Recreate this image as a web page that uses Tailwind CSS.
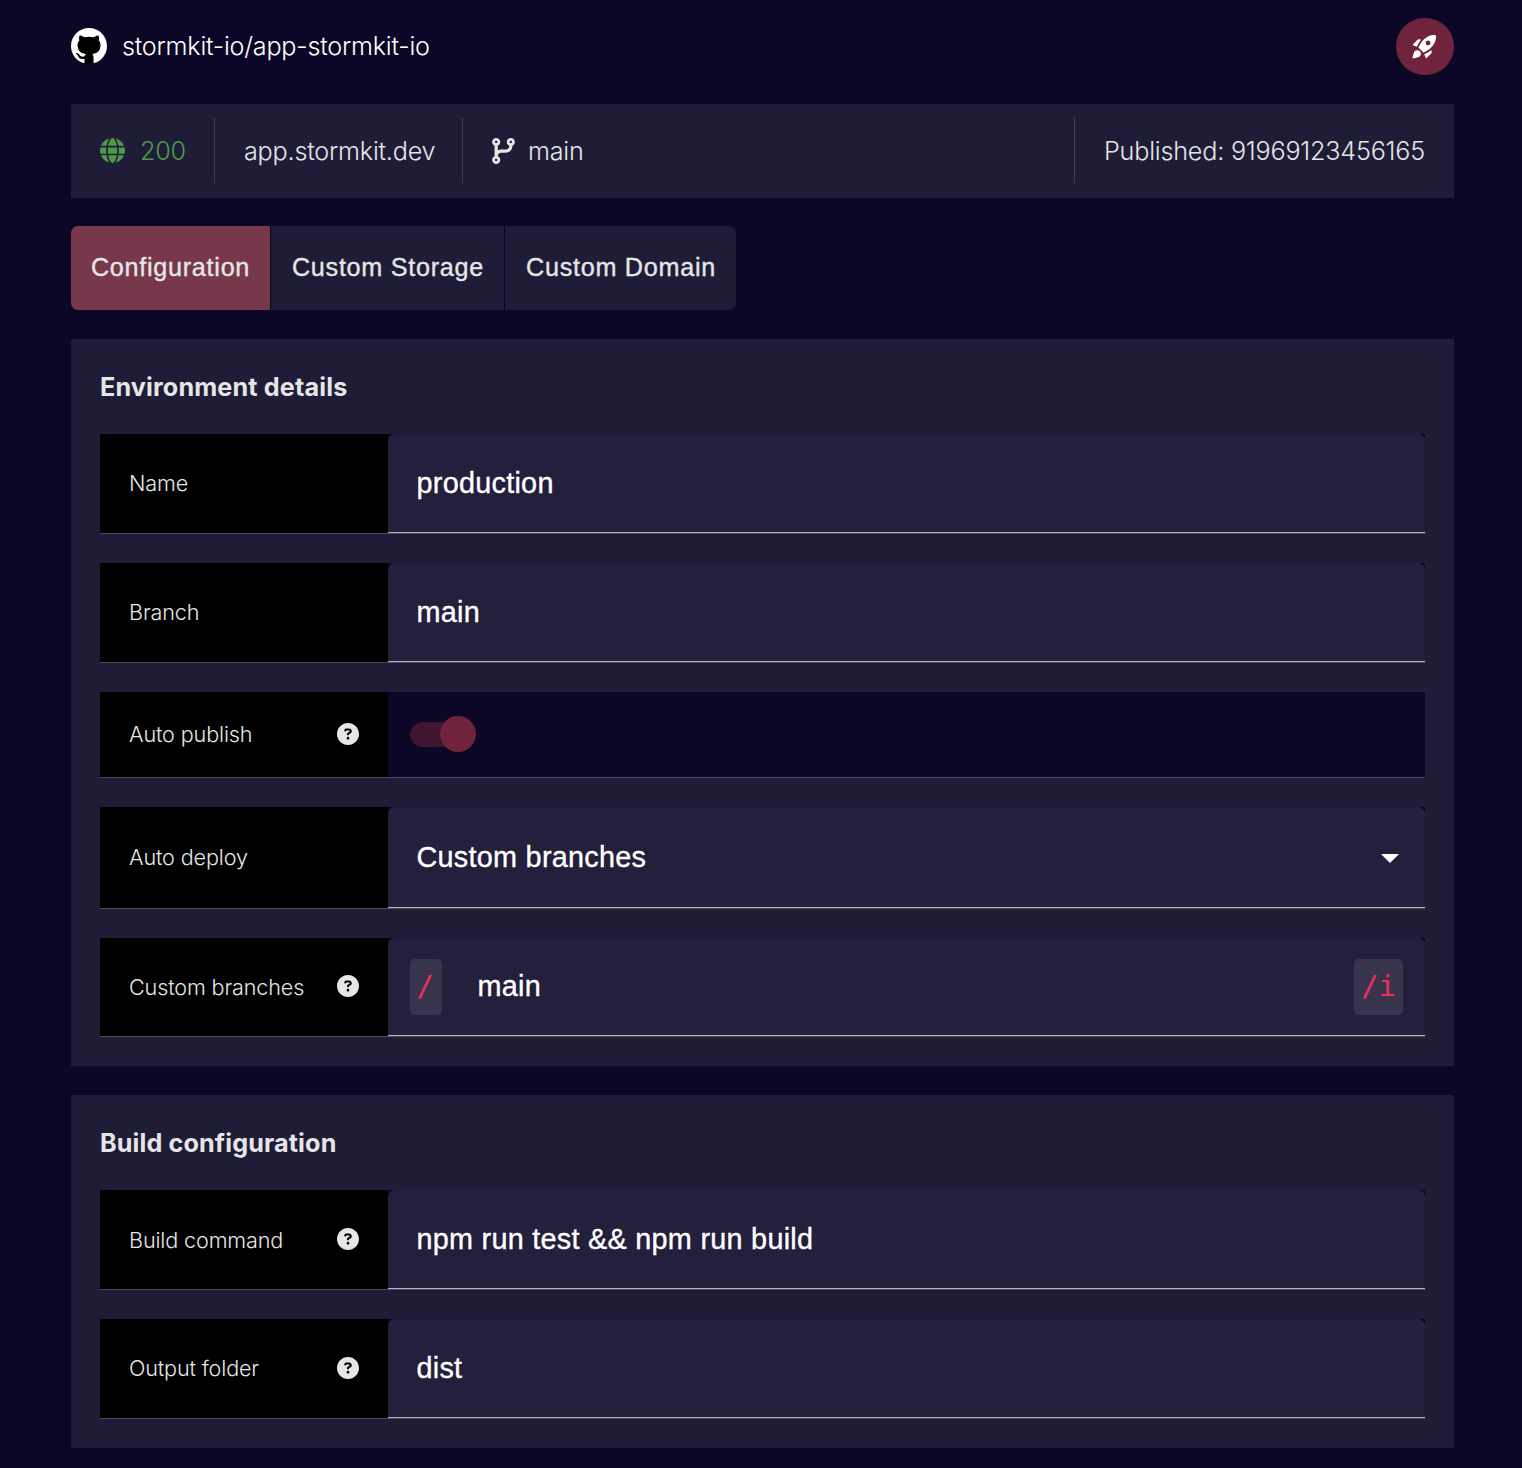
<!DOCTYPE html>
<html lang="en">
<head>
<meta charset="utf-8">
<title>Environment configuration</title>
<script src="https://cdn.jsdelivr.net/npm/@tailwindcss/browser@4"></script>
</head>
<body class="bg-[#0d0727] font-['Inter',sans-serif] font-light text-[#e6e6e6]">
<svg class="hidden">
  <symbol id="help" viewBox="0 0 512 512"><path fill="currentColor" d="M256 512c141.4 0 256-114.6 256-256S397.4 0 256 0S0 114.6 0 256S114.6 512 256 512zM169.8 165.3c7.9-22.3 29.1-37.3 52.8-37.3h58.3c34.9 0 63.1 28.3 63.1 63.1c0 22.6-12.1 43.5-31.7 54.8L280 264.4c-.2 13-10.9 23.6-24 23.6c-13.3 0-24-10.7-24-24V250.5c0-8.6 4.6-16.5 12.1-20.8l44.3-25.4c4.7-2.7 7.6-7.7 7.6-13.1c0-8.4-6.8-15.1-15.1-15.1H222.6c-3.4 0-6.4 2.1-7.5 5.3l-.4 1.2c-4.4 12.5-18.2 19-30.6 14.6s-19-18.2-14.6-30.6l.4-1.2zM288 352c0 17.7-14.3 32-32 32s-32-14.3-32-32s14.3-32 32-32s32 14.3 32 32z"/></symbol>
</svg>
<div class="ml-[71px] w-[1383px] pt-[18px] pb-5">
  <header class="flex h-[57px] items-center">
    <svg class="mb-px size-9" viewBox="0 0 16 16"><circle cx="8" cy="8" r="7.8" fill="#000"/><path fill="#fff" d="M8 0C3.58 0 0 3.58 0 8c0 3.54 2.29 6.53 5.47 7.59.4.07.55-.17.55-.38 0-.19-.01-.82-.01-1.49-2.01.37-2.53-.49-2.69-.94-.09-.23-.48-.94-.82-1.13-.28-.15-.68-.52-.01-.53.63-.01 1.08.58 1.23.82.72 1.21 1.87.87 2.33.66.07-.52.28-.87.51-1.07-1.78-.2-3.64-.89-3.64-3.95 0-.87.31-1.59.82-2.15-.08-.2-.36-1.02.08-2.12 0 0 .67-.21 2.2.82.64-.18 1.32-.27 2-.27s1.36.09 2 .27c1.53-1.04 2.2-.82 2.2-.82.44 1.1.16 1.92.08 2.12.51.56.82 1.27.82 2.15 0 3.07-1.87 3.75-3.65 3.95.29.25.54.73.54 1.48 0 1.07-.01 1.93-.01 2.2 0 .21.15.46.55.38A8.01 8.01 0 0 0 16 8c0-4.42-3.58-8-8-8z"/></svg>
    <h1 class="ml-[15px] text-[25.2px] tracking-[-0.24px] text-white">stormkit-io/app-stormkit-io</h1>
    <button class="ml-auto flex h-[57px] w-[58px] items-center justify-center rounded-full bg-[#70233d] pr-[2px] text-white">
      <svg class="size-[29px]" viewBox="0 0 24 24"><path fill="currentColor" d="M9.19 6.35c-2.04 2.29-3.44 5.58-3.57 5.89L2 10.69l4.05-4.05c.47-.47 1.15-.68 1.81-.55l1.33.26zM11.17 17s3.74-1.55 5.89-3.7c5.4-5.4 4.5-9.62 4.21-10.57-.95-.3-5.17-1.19-10.57 4.21C8.55 9.09 7 12.83 7 12.83L11.17 17zm6.48-2.19c-2.29 2.04-5.58 3.44-5.89 3.57L13.31 22l4.05-4.05c.47-.47.68-1.15.55-1.81l-.26-1.33zM9 18c0 .83-.34 1.58-.88 2.12C6.94 21.3 2 22 2 22s.7-4.94 1.88-6.12C4.42 15.34 5.17 15 6 15c1.66 0 3 1.34 3 3zm4-9c0-1.1.9-2 2-2s2 .9 2 2-.9 2-2 2-2-.9-2-2z"/></svg>
    </button>
  </header>

  <section class="mt-[29px] flex h-[94px] bg-[#1f1c38] pt-[14px] pb-[15px] text-[25.2px] tracking-[-0.22px]">
    <div class="flex w-[144px] items-center border-r border-[#403d56] pl-[29px] text-[#4c9a48]">
      <svg class="size-[25px]" viewBox="0 0 512 512"><path fill="currentColor" d="M352 256c0 22.2-1.2 43.6-3.3 64H163.3c-2.2-20.4-3.3-41.8-3.3-64s1.2-43.6 3.3-64H348.7c2.2 20.4 3.3 41.8 3.3 64zm28.8-64H503.9c5.3 20.5 8.1 41.9 8.1 64s-2.8 43.5-8.1 64H380.8c2.1-20.6 3.2-42 3.2-64s-1.1-43.4-3.2-64zm112.6-32H376.7c-10-63.9-29.8-117.4-55.3-151.6c78.3 20.7 142 77.5 171.9 151.6zm-149.1 0H167.7c6.1-36.4 15.5-68.6 27-94.7c10.5-23.6 22.2-40.7 33.5-51.5C239.4 3.2 248.7 0 256 0s16.6 3.2 27.8 13.8c11.3 10.8 23 27.9 33.5 51.5c11.6 26 20.9 58.2 27 94.7zm-209 0H18.6C48.6 85.9 112.2 29.1 190.6 8.4C165.1 42.6 145.3 96.1 135.3 160zM8.1 192H131.2c-2.1 20.6-3.2 42-3.2 64s1.1 43.4 3.2 64H8.1C2.8 299.5 0 278.1 0 256s2.8-43.5 8.1-64zM194.7 446.6c-11.6-26-20.9-58.2-27-94.6H344.3c-6.1 36.4-15.5 68.6-27 94.6c-10.5 23.6-22.2 40.7-33.5 51.5C272.6 508.8 263.3 512 256 512s-16.6-3.2-27.8-13.8c-11.3-10.8-23-27.9-33.5-51.5zM135.3 352c10 63.9 29.8 117.4 55.3 151.6C112.2 482.9 48.6 426.1 18.6 352H135.3zm358.1 0c-30 74.1-93.6 130.9-171.9 151.6c25.5-34.2 45.2-87.7 55.3-151.6H493.4z"/></svg>
      <span class="ml-[15px] pt-[2px]">200</span>
    </div>
    <div class="flex w-[248px] items-center border-r border-[#403d56] pt-[2px] pl-[29px]">app.stormkit.dev</div>
    <div class="flex items-center pl-[29px]">
      <svg class="h-[26px] w-[23px]" viewBox="0 0 448 512"><path fill="currentColor" d="M80 104c13.3 0 24-10.7 24-24s-10.7-24-24-24s-24 10.7-24 24s10.7 24 24 24zm80-24c0 32.8-19.7 61-48 73.3v87.8c18.8-10.9 40.7-17.1 64-17.1h96c35.3 0 64-28.7 64-64v-6.7C307.7 141 288 112.8 288 80c0-44.2 35.8-80 80-80s80 35.8 80 80c0 32.8-19.7 61-48 73.3V160c0 70.7-57.3 128-128 128H176c-35.3 0-64 28.7-64 64v6.7c28.3 12.3 48 40.5 48 73.3c0 44.2-35.8 80-80 80s-80-35.8-80-80c0-32.8 19.7-61 48-73.3V352 153.3C19.7 141 0 112.8 0 80C0 35.8 35.8 0 80 0s80 35.8 80 80zm232 0c0-13.3-10.7-24-24-24s-24 10.7-24 24s10.7 24 24 24s24-10.7 24-24zM80 456c13.3 0 24-10.7 24-24s-10.7-24-24-24s-24 10.7-24 24s10.7 24 24 24z"/></svg>
      <span class="ml-[13px] pt-[2px]">main</span>
    </div>
    <div class="ml-auto flex w-[380px] items-center border-l border-[#403d56] pt-[2px] pl-[29px] whitespace-nowrap">Published: 91969123456165</div>
  </section>

  <nav class="mt-7 flex h-[84px] w-[665px] gap-px overflow-hidden rounded-[7px] font-['Liberation_Sans',sans-serif] text-[25.2px] font-normal tracking-[0.72px] [-webkit-text-stroke:0.35px_currentColor]">
    <button class="w-[199px] bg-[#78384c]">Configuration</button>
    <button class="w-[233px] bg-[#1f1c38] pl-px">Custom Storage</button>
    <button class="w-[231px] bg-[#1f1c38] pl-px">Custom Domain</button>
  </nav>

  <section class="mt-[29px] h-[727px] bg-[#1f1c38] px-[29px]">
    <h2 class="flex h-[95px] items-center pt-[2px] text-[25.2px] font-bold tracking-[0.14px]">Environment details</h2>
    <div class="flex flex-col gap-[29px] text-[21.6px] tracking-[-0.14px]">
      <div class="flex h-[100px] border-b border-[#4c4a55] bg-[#0d0727]">
        <div class="flex w-[288px] items-center bg-black px-[29px]">Name</div>
        <div class="flex flex-1 items-center rounded-t-[7px] border-b border-[#b5b3bd] bg-[#241f3c] pt-[2px] pl-[28.5px] font-['Liberation_Sans',sans-serif] text-[28.8px] font-normal tracking-[0.27px] text-white [-webkit-text-stroke:0.35px_currentColor]">production</div>
      </div>
      <div class="flex h-[100px] border-b border-[#4c4a55] bg-[#0d0727]">
        <div class="flex w-[288px] items-center bg-black px-[29px]">Branch</div>
        <div class="flex flex-1 items-center rounded-t-[7px] border-b border-[#b5b3bd] bg-[#241f3c] pt-[2px] pl-[28.5px] font-['Liberation_Sans',sans-serif] text-[28.8px] font-normal tracking-[0.27px] text-white [-webkit-text-stroke:0.35px_currentColor]">main</div>
      </div>
      <div class="flex h-[86px] border-b border-[#4c4a55] bg-[#0d0727]">
        <div class="flex w-[288px] items-center justify-between bg-black px-[29px]">Auto publish<svg class="mb-[2px] size-[22px]"><use href="#help"/></svg></div>
        <div class="flex flex-1 items-center pb-px pl-[22px]">
          <div class="flex h-[25px] w-[61px] items-center rounded-full bg-[#3f152f] pl-[30px]">
            <div class="size-9 shrink-0 rounded-full bg-[#70233d] shadow-sm"></div>
          </div>
        </div>
      </div>
      <div class="flex h-[102px] border-b border-[#4c4a55] bg-[#0d0727]">
        <div class="flex w-[288px] items-center bg-black px-[29px]">Auto deploy</div>
        <div class="flex flex-1 items-center justify-between rounded-t-[7px] border-b border-[#b5b3bd] bg-[#241f3c] pt-[2px] pr-[26px] pl-[28.5px] font-['Liberation_Sans',sans-serif] text-[28.8px] font-normal tracking-[0.27px] text-white [-webkit-text-stroke:0.35px_currentColor]">Custom branches<svg class="h-[9px] w-[18px]" viewBox="0 0 18 9"><path fill="currentColor" d="M0 0h18L9 9z"/></svg></div>
      </div>
      <div class="flex h-[99px] border-b border-[#4c4a55] bg-[#0d0727]">
        <div class="flex w-[288px] items-center justify-between bg-black px-[29px]">Custom branches<svg class="mb-[2px] size-[22px]"><use href="#help"/></svg></div>
        <div class="flex flex-1 items-center rounded-t-[7px] border-b border-[#b5b3bd] bg-[#241f3c] px-[22px] font-['Liberation_Sans',sans-serif] text-[28.8px] font-normal text-white">
          <code class="flex h-14 w-8 items-center justify-center rounded-[5px] bg-[#39344d] pr-[2px] font-['DejaVu_Sans_Mono',monospace] text-[#e92f5e]">/</code>
          <span class="ml-[35.5px] tracking-[0.27px] [-webkit-text-stroke:0.35px_currentColor]">main</span>
          <code class="ml-auto flex h-14 w-[49px] items-center justify-center rounded-[5px] bg-[#39344d] font-['DejaVu_Sans_Mono',monospace] text-[#e92f5e]">/i</code>
        </div>
      </div>
    </div>
  </section>

  <section class="mt-[29px] h-[353px] bg-[#1f1c38] px-[29px]">
    <h2 class="flex h-[95px] items-center pt-[2px] text-[25.2px] font-bold tracking-[0.12px]">Build configuration</h2>
    <div class="flex flex-col gap-[29px] text-[21.6px] tracking-[-0.14px]">
      <div class="flex h-[100px] border-b border-[#4c4a55] bg-[#0d0727]">
        <div class="flex w-[288px] items-center justify-between bg-black px-[29px]"><span class="pt-[2px]">Build command</span><svg class="mb-[2px] size-[22px]"><use href="#help"/></svg></div>
        <div class="flex flex-1 items-center rounded-t-[7px] border-b border-[#b5b3bd] bg-[#241f3c] pt-[2px] pl-[28.5px] font-['Liberation_Sans',sans-serif] text-[28.8px] font-normal tracking-[0.27px] text-white [-webkit-text-stroke:0.35px_currentColor]">npm run test &amp;&amp; npm run build</div>
      </div>
      <div class="flex h-[100px] border-b border-[#4c4a55] bg-[#0d0727]">
        <div class="flex w-[288px] items-center justify-between bg-black px-[29px]">Output folder<svg class="mb-[2px] size-[22px]"><use href="#help"/></svg></div>
        <div class="flex flex-1 items-center rounded-t-[7px] border-b border-[#b5b3bd] bg-[#241f3c] pt-[2px] pl-[28.5px] font-['Liberation_Sans',sans-serif] text-[28.8px] font-normal tracking-[0.27px] text-white [-webkit-text-stroke:0.35px_currentColor]">dist</div>
      </div>
    </div>
  </section>
</div>
</body>
</html>
